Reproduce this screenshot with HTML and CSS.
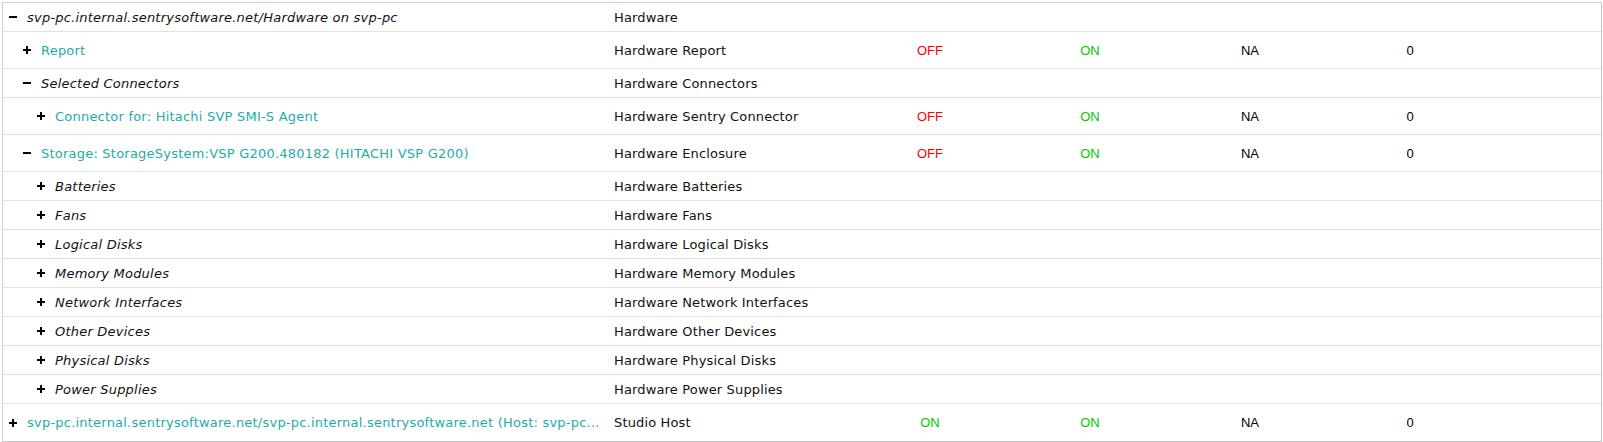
FILE: index.html
```html
<!DOCTYPE html>
<html>
<head>
<meta charset="utf-8">
<link rel="stylesheet" href="styles.css">
</head>
<body>
<div class="tree">
  <div class="row short">
    <div class="name lvl0"><svg class="exp" viewBox="0 0 8 8"><rect x="0" y="3" width="8" height="2"/></svg><span class="label group">svp-pc.internal.sentrysoftware.net/Hardware on svp-pc</span></div>
    <div class="type">Hardware</div>
    <div class="st"></div><div class="st"></div><div class="st"></div><div class="st"></div><div></div>
  </div>
  <div class="row tall">
    <div class="name lvl1"><svg class="exp" viewBox="0 0 8 8"><rect x="0" y="3" width="8" height="2"/><rect x="3" y="0" width="2" height="8"/></svg><span class="label link">Report</span></div>
    <div class="type">Hardware Report</div>
    <div class="st off">OFF</div><div class="st on">ON</div><div class="st">NA</div><div class="st">0</div><div></div>
  </div>
  <div class="row short">
    <div class="name lvl1"><svg class="exp" viewBox="0 0 8 8"><rect x="0" y="3" width="8" height="2"/></svg><span class="label group">Selected Connectors</span></div>
    <div class="type">Hardware Connectors</div>
    <div class="st"></div><div class="st"></div><div class="st"></div><div class="st"></div><div></div>
  </div>
  <div class="row tall">
    <div class="name lvl2"><svg class="exp" viewBox="0 0 8 8"><rect x="0" y="3" width="8" height="2"/><rect x="3" y="0" width="2" height="8"/></svg><span class="label link">Connector for: Hitachi SVP SMI-S Agent</span></div>
    <div class="type">Hardware Sentry Connector</div>
    <div class="st off">OFF</div><div class="st on">ON</div><div class="st">NA</div><div class="st">0</div><div></div>
  </div>
  <div class="row tall">
    <div class="name lvl1"><svg class="exp" viewBox="0 0 8 8"><rect x="0" y="3" width="8" height="2"/></svg><span class="label link">Storage: StorageSystem:VSP G200.480182 (HITACHI VSP G200)</span></div>
    <div class="type">Hardware Enclosure</div>
    <div class="st off">OFF</div><div class="st on">ON</div><div class="st">NA</div><div class="st">0</div><div></div>
  </div>
  <div class="row short">
    <div class="name lvl2"><svg class="exp" viewBox="0 0 8 8"><rect x="0" y="3" width="8" height="2"/><rect x="3" y="0" width="2" height="8"/></svg><span class="label group">Batteries</span></div>
    <div class="type">Hardware Batteries</div>
    <div class="st"></div><div class="st"></div><div class="st"></div><div class="st"></div><div></div>
  </div>
  <div class="row short">
    <div class="name lvl2"><svg class="exp" viewBox="0 0 8 8"><rect x="0" y="3" width="8" height="2"/><rect x="3" y="0" width="2" height="8"/></svg><span class="label group">Fans</span></div>
    <div class="type">Hardware Fans</div>
    <div class="st"></div><div class="st"></div><div class="st"></div><div class="st"></div><div></div>
  </div>
  <div class="row short">
    <div class="name lvl2"><svg class="exp" viewBox="0 0 8 8"><rect x="0" y="3" width="8" height="2"/><rect x="3" y="0" width="2" height="8"/></svg><span class="label group">Logical Disks</span></div>
    <div class="type">Hardware Logical Disks</div>
    <div class="st"></div><div class="st"></div><div class="st"></div><div class="st"></div><div></div>
  </div>
  <div class="row short">
    <div class="name lvl2"><svg class="exp" viewBox="0 0 8 8"><rect x="0" y="3" width="8" height="2"/><rect x="3" y="0" width="2" height="8"/></svg><span class="label group">Memory Modules</span></div>
    <div class="type">Hardware Memory Modules</div>
    <div class="st"></div><div class="st"></div><div class="st"></div><div class="st"></div><div></div>
  </div>
  <div class="row short">
    <div class="name lvl2"><svg class="exp" viewBox="0 0 8 8"><rect x="0" y="3" width="8" height="2"/><rect x="3" y="0" width="2" height="8"/></svg><span class="label group">Network Interfaces</span></div>
    <div class="type">Hardware Network Interfaces</div>
    <div class="st"></div><div class="st"></div><div class="st"></div><div class="st"></div><div></div>
  </div>
  <div class="row short">
    <div class="name lvl2"><svg class="exp" viewBox="0 0 8 8"><rect x="0" y="3" width="8" height="2"/><rect x="3" y="0" width="2" height="8"/></svg><span class="label group">Other Devices</span></div>
    <div class="type">Hardware Other Devices</div>
    <div class="st"></div><div class="st"></div><div class="st"></div><div class="st"></div><div></div>
  </div>
  <div class="row short">
    <div class="name lvl2"><svg class="exp" viewBox="0 0 8 8"><rect x="0" y="3" width="8" height="2"/><rect x="3" y="0" width="2" height="8"/></svg><span class="label group">Physical Disks</span></div>
    <div class="type">Hardware Physical Disks</div>
    <div class="st"></div><div class="st"></div><div class="st"></div><div class="st"></div><div></div>
  </div>
  <div class="row short">
    <div class="name lvl2"><svg class="exp" viewBox="0 0 8 8"><rect x="0" y="3" width="8" height="2"/><rect x="3" y="0" width="2" height="8"/></svg><span class="label group">Power Supplies</span></div>
    <div class="type">Hardware Power Supplies</div>
    <div class="st"></div><div class="st"></div><div class="st"></div><div class="st"></div><div></div>
  </div>
  <div class="row tall last">
    <div class="name lvl0"><svg class="exp" viewBox="0 0 8 8"><rect x="0" y="3" width="8" height="2"/><rect x="3" y="0" width="2" height="8"/></svg><span class="label link">svp-pc.internal.sentrysoftware.net/svp-pc.internal.sentrysoftware.net (Host: svp-pc...</span></div>
    <div class="type">Studio Host</div>
    <div class="st on">ON</div><div class="st on">ON</div><div class="st">NA</div><div class="st">0</div><div></div>
  </div>
</div>
</body>
</html>
```
FILE: styles.css
```css
html, body {
  margin: 0;
  padding: 0;
  background: #ffffff;
}

body {
  padding: 2px 0 0 2px;
  font-family: "DejaVu Sans", Verdana, sans-serif;
  font-size: 13px;
  color: #111111;
}

.tree {
  width: 1600px;
  box-sizing: border-box;
  border: 1px solid #d2d2d2;
  border-right-color: #c4c4c4;
  border-bottom-color: #c4c4c4;
}

.row {
  display: grid;
  grid-template-columns: 599px 248px 160px 160px 160px 160px 1fr;
  align-items: center;
  border-bottom: 1px solid #e2e2e2;
  box-sizing: border-box;
}

.row.last {
  border-bottom: none;
}

.row.short { height: 29px; }
.row.tall { height: 37px; }

.name {
  display: flex;
  align-items: center;
  min-width: 0;
  overflow: hidden;
  white-space: nowrap;
}

.lvl0 { padding-left: 6px; }
.lvl1 { padding-left: 20px; }
.lvl2 { padding-left: 34px; }

.exp {
  width: 8px;
  height: 8px;
  flex: none;
  margin-right: 10px;
  fill: #000000;
}

.label {
  overflow: hidden;
  white-space: nowrap;
  min-width: 0;
  letter-spacing: 0.22px;
}

.group {
  font-style: italic;
  color: #111111;
}

.link {
  color: #1eacaa;
}

.type {
  padding-left: 12px;
  white-space: nowrap;
  letter-spacing: 0.15px;
}

.st {
  text-align: center;
  font-family: "Liberation Sans", Arial, sans-serif;
  font-size: 13px;
  color: #000000;
}

.off { color: #ff0000; }
.on { color: #00c800; }
```
